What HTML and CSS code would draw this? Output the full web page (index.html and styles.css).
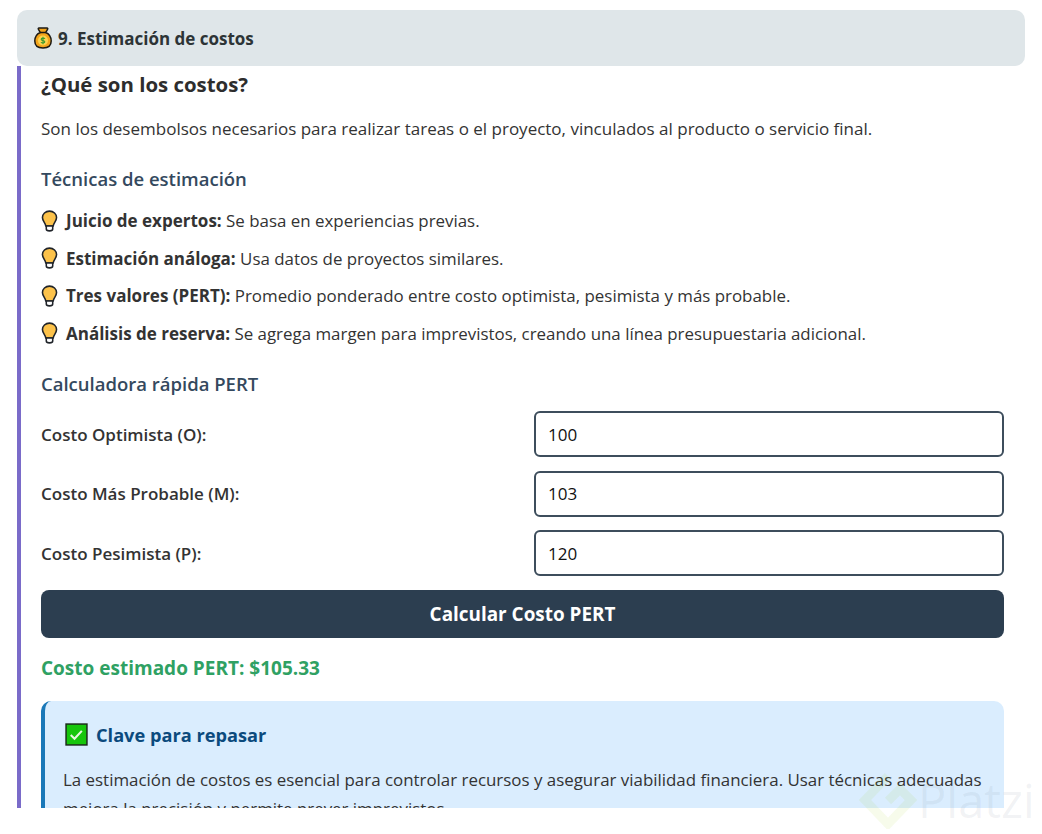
FILE: index.html
```html
<!DOCTYPE html>
<html lang="es">

<head>
  <meta charset="UTF-8">
  <meta name="viewport" content="width=device-width, initial-scale=1.0">
  <title>Estimación de costos</title>
  <link rel="stylesheet" href="styles.css">
</head>

<body>
  <div class="page">
    <div class="section-header">
      <svg class="icon-bag" viewBox="0 0 18 22" width="18" height="22">
        <path d="M5 1h8c.8 0 1 .9.5 1.400L11.800 5.500C15 7 17.200 10.300 17.200 14c0 5-3.300 7-8.200 7s-8.200-2-8.200-7c0-3.700 2.200-7 5.400-8.500L4.500 2.400C4 1.900 4.200 1 5 1z" fill="#f3a41b" stroke="#1c1a14" stroke-width="1.500"/>
        <path d="M6 5.500h6" stroke="#1c1a14" stroke-width="1.500"/>
        <circle cx="9" cy="13.500" r="5" fill="#fdd34e"/>
        <path d="M11 11.700c-.7-.8-3.800-1-3.800.7 0 1.600 3.600.8 3.600 2.400 0 1.600-3 1.400-3.900.6M9 9.700v7.600" fill="none" stroke="#3d9a2d" stroke-width="1.100"/>
      </svg>
      <span>9. Estimación de costos</span>
    </div>

    <div class="section-body">
      <h3 class="title">¿Qué son los costos?</h3>
      <p class="intro">Son los desembolsos necesarios para realizar tareas o el proyecto, vinculados al producto o servicio final.</p>

      <h4 class="subtitle">Técnicas de estimación</h4>
      <ul class="tips">
        <li>
          <svg class="icon-bulb" viewBox="0 0 18 24" width="17" height="22"><path d="M9 1.200C4.600 1.200 1.300 4.300 1.300 8.300c0 3.800 3.100 5.500 3.700 9.200h8c.6-3.700 3.700-5.400 3.700-9.200 0-4-3.300-7.100-7.700-7.100z" fill="#fcc24a" stroke="#20242a" stroke-width="1.700"/><path d="M5.500 17.500h7v3.200c0 1.400-1.400 2.100-3.500 2.100s-3.500-.7-3.500-2.100z" fill="#fff" stroke="#20242a" stroke-width="1.700"/></svg>
          <span><strong>Juicio de expertos:</strong> Se basa en experiencias previas.</span>
        </li>
        <li>
          <svg class="icon-bulb" viewBox="0 0 18 24" width="17" height="22"><path d="M9 1.200C4.600 1.200 1.300 4.300 1.300 8.300c0 3.800 3.100 5.500 3.700 9.200h8c.6-3.700 3.700-5.400 3.700-9.200 0-4-3.300-7.100-7.700-7.100z" fill="#fcc24a" stroke="#20242a" stroke-width="1.700"/><path d="M5.500 17.500h7v3.200c0 1.400-1.400 2.100-3.500 2.100s-3.500-.7-3.500-2.100z" fill="#fff" stroke="#20242a" stroke-width="1.700"/></svg>
          <span><strong>Estimación análoga:</strong> Usa datos de proyectos similares.</span>
        </li>
        <li>
          <svg class="icon-bulb" viewBox="0 0 18 24" width="17" height="22"><path d="M9 1.200C4.600 1.200 1.300 4.300 1.300 8.300c0 3.800 3.100 5.500 3.700 9.200h8c.6-3.700 3.700-5.400 3.700-9.200 0-4-3.300-7.100-7.700-7.100z" fill="#fcc24a" stroke="#20242a" stroke-width="1.700"/><path d="M5.500 17.500h7v3.200c0 1.400-1.400 2.100-3.500 2.100s-3.500-.7-3.500-2.100z" fill="#fff" stroke="#20242a" stroke-width="1.700"/></svg>
          <span><strong>Tres valores (PERT):</strong> Promedio ponderado entre costo optimista, pesimista y más probable.</span>
        </li>
        <li>
          <svg class="icon-bulb" viewBox="0 0 18 24" width="17" height="22"><path d="M9 1.200C4.600 1.200 1.300 4.300 1.300 8.300c0 3.800 3.100 5.500 3.700 9.200h8c.6-3.700 3.700-5.400 3.700-9.200 0-4-3.300-7.100-7.700-7.100z" fill="#fcc24a" stroke="#20242a" stroke-width="1.700"/><path d="M5.500 17.500h7v3.200c0 1.400-1.400 2.100-3.500 2.100s-3.500-.7-3.500-2.100z" fill="#fff" stroke="#20242a" stroke-width="1.700"/></svg>
          <span><strong>Análisis de reserva:</strong> Se agrega margen para imprevistos, creando una línea presupuestaria adicional.</span>
        </li>
      </ul>

      <h4 class="subtitle subtitle-calc">Calculadora rápida PERT</h4>
      <div class="calc-row">
        <label for="opt">Costo Optimista (O):</label>
        <input id="opt" type="text" value="100">
      </div>
      <div class="calc-row">
        <label for="mid">Costo Más Probable (M):</label>
        <input id="mid" type="text" value="103">
      </div>
      <div class="calc-row">
        <label for="pes">Costo Pesimista (P):</label>
        <input id="pes" type="text" value="120">
      </div>
      <button class="calc-btn">Calcular Costo PERT</button>
      <div class="calc-result">Costo estimado PERT: $105.33</div>

      <div class="review-box">
        <h4 class="review-title">
          <svg viewBox="0 0 22 22" width="23" height="23"><rect x="1" y="1" width="20" height="20" fill="#16c60c" stroke="#1a2a1a" stroke-width="1.400"/><path d="M5.500 11.500l3.600 3.500 7-7.500" fill="none" stroke="#e6f7e0" stroke-width="2"/></svg>
          <span>Clave para repasar</span>
        </h4>
        <p>La estimación de costos es esencial para controlar recursos y asegurar viabilidad financiera. Usar técnicas adecuadas mejora la precisión y permite prever imprevistos.</p>
      </div>
    </div>
  </div>

  <div class="watermark">
    <svg viewBox="0 0 60 58" width="60" height="58"><path d="M30 5L7 29l23 24 23-24-11-11-12 12" fill="none" stroke="#98ce00" stroke-opacity="0.08" stroke-width="9"/></svg>
    <span>Platzi</span>
  </div>
</body>

</html>
```

FILE: styles.css
```css
* {
  margin: 0;
  padding: 0;
  box-sizing: border-box;
}

body {
  font-family: 'Open Sans', 'Noto Sans', sans-serif;
  background: white;
  color: #333;
  font-size: 17px;
}

.page {
  height: 808px;
  padding: 10px 17px 0;
  overflow: hidden;
}

.section-header {
  height: 56px;
  padding: 0 17px;
  background: #dfe6e9;
  border-radius: 10px;
  display: flex;
  align-items: center;
  gap: 6px;
  font-size: 17px;
  font-weight: 700;
  color: #2d3436;
}

.section-body {
  border-left: 4px solid #7a6bc9;
  padding: 5px 21px 0 20px;
}

.title {
  font-size: 20.400px;
  line-height: 26px;
  font-weight: 700;
  color: #2d2d2d;
  margin-bottom: 19px;
}

.intro {
  line-height: 26px;
  margin-bottom: 24px;
}

.subtitle {
  font-size: 18.500px;
  line-height: 26px;
  font-weight: 600;
  color: #34495e;
  margin-bottom: 10px;
}

.tips {
  list-style: none;
}

.tips li {
  height: 37.500px;
  display: flex;
  align-items: center;
  gap: 8px;
  font-size: 16.900px;
}

.tips strong {
  font-size: 17px;
  font-weight: 700;
}

.subtitle-calc {
  margin-top: 19px;
  margin-bottom: 14px;
}

.calc-row {
  height: 46px;
  margin-bottom: 13.500px;
  display: flex;
  align-items: center;
  justify-content: space-between;
}

.calc-row label {
  font-weight: 600;
}

.calc-row input {
  width: 470px;
  height: 46px;
  padding: 0 12px;
  border: 2px solid #3d4d5c;
  border-radius: 6px;
  font-family: inherit;
  font-size: 17px;
  color: #111;
}

.calc-btn {
  display: block;
  width: 100%;
  height: 48px;
  background: #2c3e50;
  color: white;
  border: none;
  border-radius: 8px;
  font-family: inherit;
  font-size: 18.900px;
  font-weight: 700;
}

.calc-result {
  margin-top: 17px;
  line-height: 26px;
  font-size: 19px;
  font-weight: 700;
  color: #2fa163;
}

.review-box {
  margin-top: 20px;
  padding: 20px 10px 20px 18px;
  background: #daedfe;
  border-left: 4px solid #1a78b8;
  border-radius: 10px;
}

.review-title {
  display: flex;
  align-items: center;
  gap: 8px;
  font-size: 18.200px;
  line-height: 28px;
  font-weight: 700;
  color: #0b4a7d;
  margin-bottom: 16px;
}

.review-title svg {
  margin-left: 2px;
}

.review-box p {
  line-height: 29px;
  font-size: 16.900px;
  color: #333;
}

.watermark {
  position: absolute;
  left: 858px;
  top: 768px;
  display: flex;
  align-items: center;
  gap: 0;
  font-size: 47px;
  color: rgba(120, 135, 150, 0.1);
}
```
